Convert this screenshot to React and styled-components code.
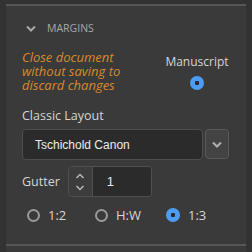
import styled, { createGlobalStyle } from "styled-components";

const Global = createGlobalStyle`
  html, body {
    margin: 0;
    background: #323232;
  }
  body {
    font-family: "Open Sans", "DejaVu Sans", sans-serif;
  }
`;

const Frame = styled.div`
  width: 252px;
  height: 252px;
  padding: 4px 6px 0;
  box-sizing: border-box;
  overflow: hidden;
`;

const Panel = styled.section`
  background: #3a3a3a;
  border-top: 2px solid #565656;
  height: 240px;
  box-sizing: border-box;
  padding: 13px 17px 0 16px;
  display: flex;
  flex-direction: column;
`;

const NextPanel = styled.div`
  background: #3a3a3a;
  border-top: 2px solid #565656;
  height: 10px;
`;

const Header = styled.div`
  display: flex;
  align-items: center;
  gap: 11px;
  height: 18px;
  padding-left: 4px;
  color: #a8a8a8;
  font-family: "Open Sans", sans-serif;
  font-size: 10.5px;
`;

const TopRow = styled.div`
  display: flex;
  align-items: center;
  justify-content: space-between;
  margin-top: 13px;
`;

const Warning = styled.p`
  margin: 0;
  width: 130px;
  color: #d9892a;
  font-style: italic;
  font-size: 13px;
  line-height: 14px;
  font-family: "Open Sans", sans-serif;
`;

const Stack = styled.div`
  display: flex;
  flex-direction: column;
  align-items: center;
  gap: 6px;
  width: 64px;
`;

const Label = styled.span`
  color: #d6d6d6;
  font-size: ${(p) => p.size || 12.5}px;
  font-family: "Open Sans", sans-serif;
`;

const Radio = styled.span`
  display: inline-block;
  box-sizing: border-box;
  width: ${(p) => p.d}px;
  height: ${(p) => p.d}px;
  border-radius: 50%;
  flex: none;
  ${(p) =>
    p.checked
      ? `background: radial-gradient(circle, #2a2a2a 0 2px, #4b9cf2 2.5px);`
      : `border: 2px solid #9a9a9a;`}
`;

const FieldLabel = styled(Label)`
  margin-top: 15px;
  line-height: 18px;
`;

const SelectRow = styled.div`
  display: flex;
  gap: 2px;
  margin-top: 4px;
  height: 31px;
`;

const Select = styled.div`
  flex: 1;
  display: flex;
  align-items: center;
  padding-left: 12px;
  background: #2b2b2b;
  border: 1px solid #4e4e4e;
  border-radius: 4px;
  color: #ececec;
  font-family: "Liberation Sans", Arial, sans-serif;
  font-size: 12px;
`;

const DropButton = styled.div`
  width: 24px;
  height: 30px;
  box-sizing: border-box;
  display: flex;
  align-items: center;
  justify-content: center;
  background: #434343;
  border: 1px solid #5a5a5a;
  border-radius: 4px;
`;

const GutterRow = styled.div`
  display: flex;
  align-items: center;
  gap: 8px;
  margin-top: 6px;
`;

const Stepper = styled.div`
  display: flex;
  width: 84px;
  height: 31px;
  box-sizing: border-box;
  border: 1px solid #505050;
  border-radius: 4px;
  overflow: hidden;
`;

const Arrows = styled.div`
  width: 23px;
  display: flex;
  align-items: center;
  justify-content: center;
  border-right: 1px solid #505050;
  background: #3c3c3c;
`;

const Value = styled.div`
  flex: 1;
  display: flex;
  align-items: center;
  padding-left: 14px;
  background: #2b2b2b;
  color: #e6e6e6;
  font-size: 13px;
  font-family: "Liberation Sans", Arial, sans-serif;
`;

const RatioRow = styled.div`
  display: flex;
  align-items: center;
  margin-top: 9px;
  padding-left: 5px;
`;

const Ratio = styled.label`
  display: flex;
  align-items: center;
  gap: 8px;
  width: ${(p) => p.w}px;
`;

const Chevron = ({ color = "#a8a8a8" }) => (
  <svg width="10" height="7" viewBox="0 0 10 7">
    <path d="M1 1.5l4 4 4-4" fill="none" stroke={color} strokeWidth="2" />
  </svg>
);

export default function App() {
  return (
    <>
      <Global />
      <Frame>
        <Panel>
          <Header>
            <Chevron />
            MARGINS
          </Header>
          <TopRow>
            <Warning>Close document without saving to discard changes</Warning>
            <Stack>
              <Label size={12}>Manuscript</Label>
              <Radio d={14} checked />
            </Stack>
          </TopRow>
          <FieldLabel>Classic Layout</FieldLabel>
          <SelectRow>
            <Select>Tschichold Canon</Select>
            <DropButton>
              <Chevron color="#b0b0b0" />
            </DropButton>
          </SelectRow>
          <GutterRow>
            <Label>Gutter</Label>
            <Stepper>
              <Arrows>
                <svg width="10" height="20" viewBox="0 0 10 20">
                  <path d="M1.5 6l3.5-3.5 3.5 3.5M1.5 14l3.5 3.5 3.5-3.5" fill="none" stroke="#b8b8b8" strokeWidth="1.5" />
                </svg>
              </Arrows>
              <Value>1</Value>
            </Stepper>
          </GutterRow>
          <RatioRow>
            <Ratio w={68}>
              <Radio d={13} />
              <Label size={13}>1:2</Label>
            </Ratio>
            <Ratio w={71}>
              <Radio d={13} />
              <Label size={13}>H:W</Label>
            </Ratio>
            <Ratio w={60}>
              <Radio d={14} checked />
              <Label size={13}>1:3</Label>
            </Ratio>
          </RatioRow>
        </Panel>
        <NextPanel />
      </Frame>
    </>
  );
}
